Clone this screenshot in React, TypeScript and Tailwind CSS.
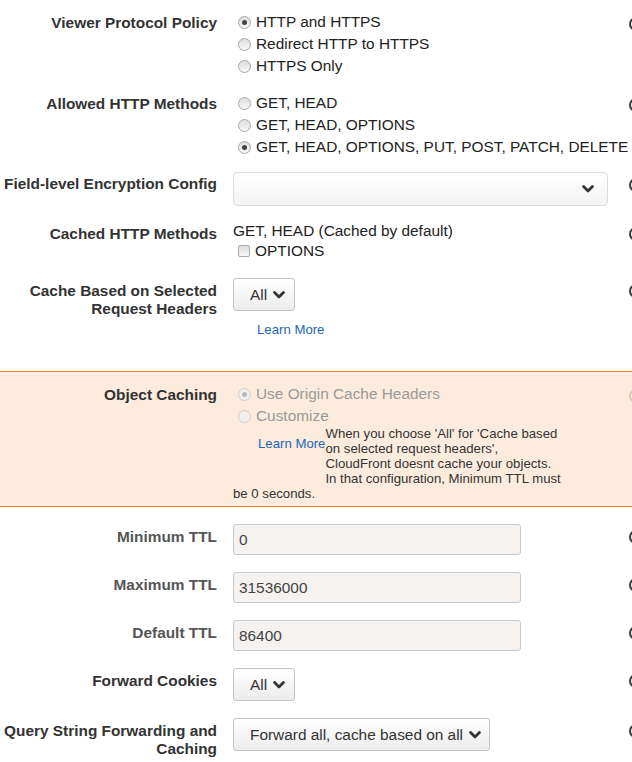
import type { ReactNode } from 'react'

const FONT = { fontFamily: '"Liberation Sans", Arial, sans-serif' }

function InfoDot({ faint = false }: { faint?: boolean }) {
  return (
    <span
      aria-hidden="true"
      className={`block h-[14px] w-[14px] rounded-full border-2 ${faint ? 'border-[#dcc6b0]' : 'border-[#3a3a3a]'}`}
    />
  )
}

function Chevron() {
  return (
    <svg aria-hidden="true" viewBox="0 0 12 8" className="h-[8px] w-[12px]">
      <path d="M1.6 1.6l4.4 4.4 4.4-4.4" fill="none" stroke="#333" strokeWidth="2.8" strokeLinecap="round" strokeLinejoin="round" />
    </svg>
  )
}

function Radio({ checked = false, disabled = false, children }: { checked?: boolean; disabled?: boolean; children: ReactNode }) {
  return (
    <div className={`flex h-[22px] items-center whitespace-nowrap ${disabled ? 'text-[#9a9a9a]' : 'text-[#222]'}`}>
      <span
        className={`ml-[5px] mr-[5px] flex h-[13px] w-[13px] shrink-0 items-center justify-center rounded-full border ${
          disabled ? 'border-[#d2cfcc] bg-[#f1f0ef]' : 'border-[#a9a9a9] bg-gradient-to-b from-[#dcdcdc] to-[#f7f7f7]'
        }`}
      >
        {checked ? <span className={`h-[5px] w-[5px] rounded-full ${disabled ? 'bg-[#b8b8b8]' : 'bg-[#444]'}`} /> : null}
      </span>
      <span className="text-[15.4px]">{children}</span>
    </div>
  )
}

function Row({
  label,
  labelClass = 'text-[#333]',
  labelPad = 'pt-[4px]',
  className = '',
  iconPad = 'pt-[6px]',
  faint = false,
  children,
}: {
  label: ReactNode
  labelClass?: string
  labelPad?: string
  className?: string
  iconPad?: string
  faint?: boolean
  children: ReactNode
}) {
  return (
    <div className={`grid grid-cols-[217px_380px_14px] gap-x-4 ${className}`}>
      <div className={`text-right text-[15.4px] font-bold leading-[18px] ${labelPad} ${labelClass}`}>{label}</div>
      <div>{children}</div>
      <div className={iconPad}>
        <InfoDot faint={faint} />
      </div>
    </div>
  )
}

function DropButton({ children, className = '' }: { children: ReactNode; className?: string }) {
  return (
    <div
      className={`flex h-[33px] items-center gap-[6px] whitespace-nowrap rounded-[3px] border border-[#c4c4c4] bg-gradient-to-b from-[#ffffff] to-[#ececec] pl-[16px] text-[15.4px] text-[#333] ${className}`}
    >
      <span>{children}</span>
      <Chevron />
    </div>
  )
}

function TtlInput({ value }: { value: string }) {
  return (
    <div className="flex h-[31px] w-[288px] items-center rounded-[3px] border border-[#c9c9c9] bg-[#f5f2ef] pl-[5px] text-[15.4px] text-[#444]">
      {value}
    </div>
  )
}

export default function App() {
  return (
    <div className="h-[762px] w-[632px] overflow-hidden bg-white" style={FONT}>
      <Row label="Viewer Protocol Policy" labelPad="pt-[3px]" className="pt-[11px]">
        <Radio checked>HTTP and HTTPS</Radio>
        <Radio>Redirect HTTP to HTTPS</Radio>
        <Radio>HTTPS Only</Radio>
      </Row>

      <Row label="Allowed HTTP Methods" labelPad="pt-[3px]" className="mt-[15px]">
        <Radio>GET, HEAD</Radio>
        <Radio>GET, HEAD, OPTIONS</Radio>
        <Radio checked>GET, HEAD, OPTIONS, PUT, POST, PATCH, DELETE</Radio>
      </Row>

      <Row label="Field-level Encryption Config" labelPad="pt-[3px]" className="mt-[14px]">
        <div className="flex h-[34px] w-[375px] items-center justify-end rounded-[4px] border border-[#dcdcdc] bg-gradient-to-b from-[#ffffff] to-[#f3f3f3] pr-[13px]">
          <Chevron />
        </div>
      </Row>

      <Row label="Cached HTTP Methods" className="mt-[15px]">
        <div className="text-[15.4px] leading-[20px] text-[#222]">
          <div>GET, HEAD (Cached by default)</div>
          <div className="flex items-center">
            <span className="ml-[5px] mr-[5px] h-[12px] w-[12px] rounded-[2px] border border-[#a9a9a9] bg-gradient-to-b from-[#dedede] to-[#f7f7f7]" />
            <span>OPTIONS</span>
          </div>
        </div>
      </Row>

      <Row
        label={
          <>
            Cache Based on Selected
            <br />
            Request Headers
          </>
        }
        className="mt-[17px]"
      >
        <DropButton className="w-[62px]">All</DropButton>
        <a className="ml-[24px] mt-[11px] block text-[13.2px] leading-[16px] text-[#2266bb]">Learn More</a>
      </Row>

      <section className="mt-[33px] border-y border-[#e6822e] bg-[#fdecdd] pb-[5px] pt-[11px]">
        <Row label="Object Caching" labelPad="pt-[3px]" faint>
          <Radio checked disabled>
            Use Origin Cache Headers
          </Radio>
          <Radio disabled>Customize</Radio>
        </Row>
        <div className="-mt-[1px] ml-[233px] whitespace-nowrap text-[13.2px] leading-[15px] text-[#333]">
          <div className="flex items-start">
            <a className="ml-[25px] mt-[10px] text-[#2266bb]">Learn More</a>
            <div>
              When you choose &apos;All&apos; for &apos;Cache based
              <br />
              on selected request headers&apos;,
              <br />
              CloudFront doesnt cache your objects.
              <br />
              In that configuration, Minimum TTL must
            </div>
          </div>
          <div>be 0 seconds.</div>
        </div>
      </section>

      <Row label="Minimum TTL" labelClass="text-[#555]" className="mt-[17px]">
        <TtlInput value="0" />
      </Row>
      <Row label="Maximum TTL" labelClass="text-[#555]" className="mt-[17px]">
        <TtlInput value="31536000" />
      </Row>
      <Row label="Default TTL" labelClass="text-[#555]" className="mt-[17px]">
        <TtlInput value="86400" />
      </Row>

      <Row label="Forward Cookies" className="mt-[17px]">
        <DropButton className="w-[62px]">All</DropButton>
      </Row>

      <Row
        label={
          <>
            Query String Forwarding and
            <br />
            Caching
          </>
        }
        className="mt-[17px]"
      >
        <DropButton className="w-[257px]">Forward all, cache based on all</DropButton>
      </Row>
    </div>
  )
}
